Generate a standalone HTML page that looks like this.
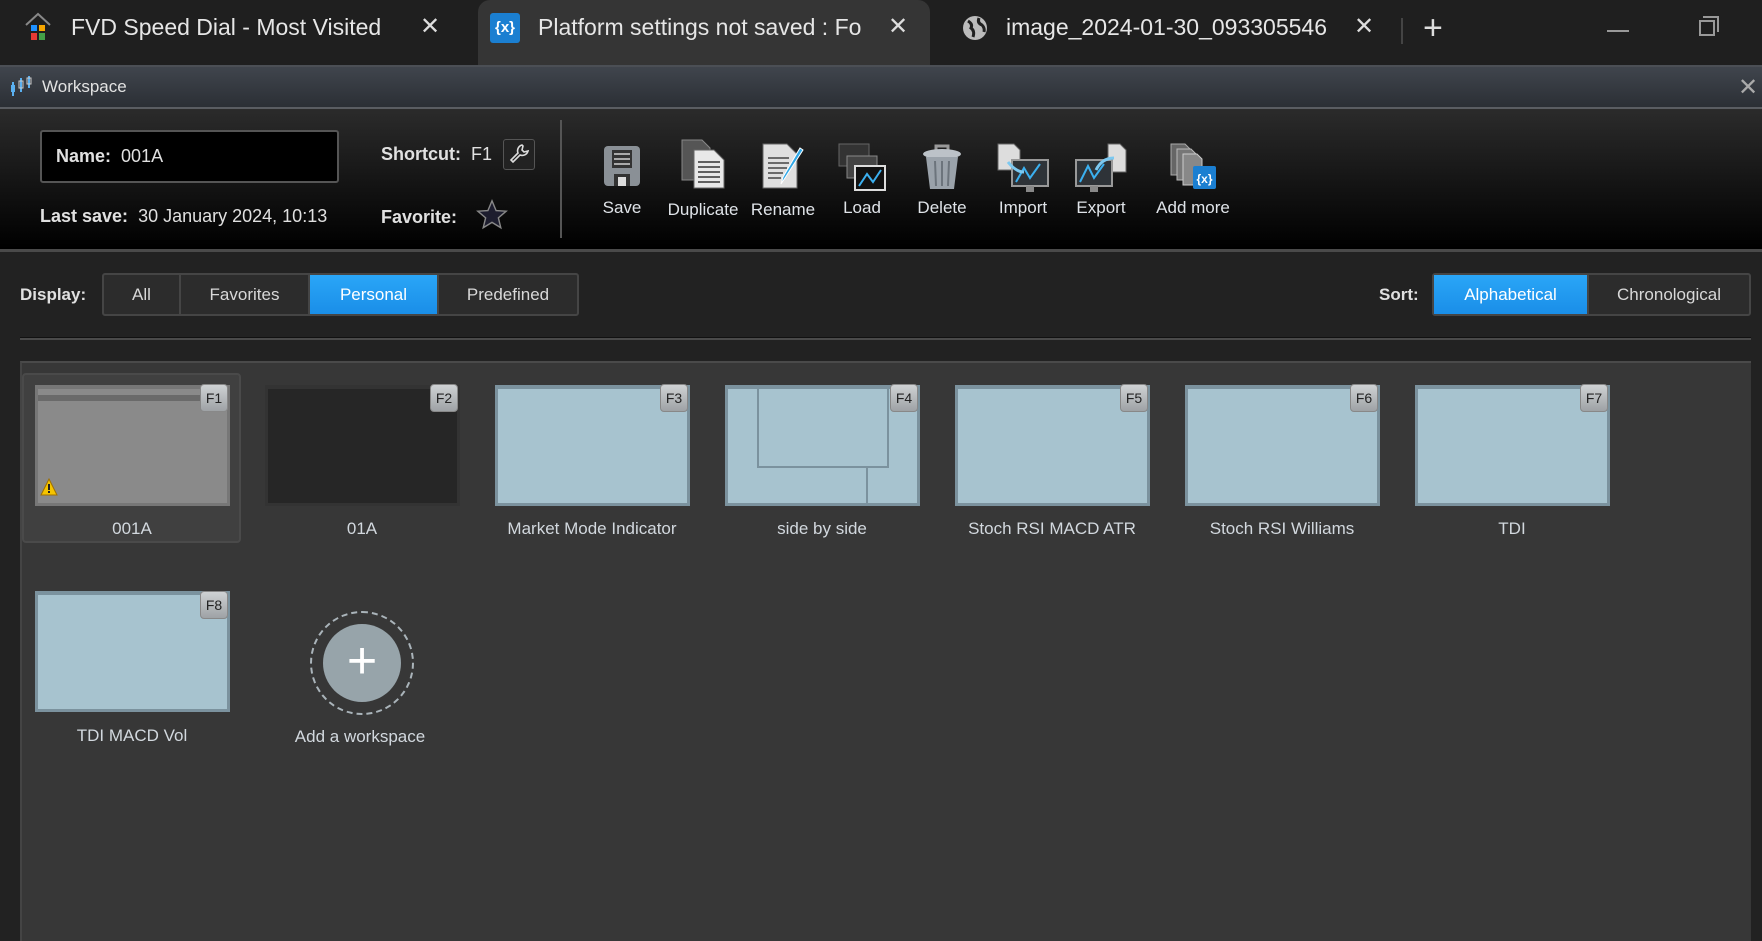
<!DOCTYPE html>
<html><head><meta charset="utf-8">
<style>
*{box-sizing:border-box;margin:0;padding:0}
body{width:1762px;height:932px;overflow:hidden;background:#222;font-family:"Liberation Sans",Arial,sans-serif;position:relative}
.a{position:absolute}
.tabbar{left:0;top:0;width:1762px;height:65px;background:#1f1f1f}
.tabtxt{font-size:23px;color:#e6e6e6;top:14px;white-space:nowrap}
.x{font-size:24px;color:#ddd;top:12px}
.title{left:0;top:65px;width:1762px;height:44px;background:linear-gradient(#40454d,#2b2f35);border-top:2px solid #4b4f55;border-bottom:2px solid #5a5d62}
.tool{left:0;top:109px;width:1762px;height:143px;background:linear-gradient(#2b2b2b,#000);border-bottom:3px solid #4a4a4a}
.lbl{color:#e0e0e0;font-size:17px;white-space:nowrap}
.hl{font-size:18px}
.b{font-weight:bold}
.tl{color:#dfe3e8;font-size:17px;top:198px;transform:translateX(-50%);white-space:nowrap}
.ico{top:142px;transform:translateX(-50%)}
.seg{top:273px;height:43px;border:2px solid #454545;border-radius:3px;display:flex;background:#2c2c2c}
.seg div{height:100%;display:flex;align-items:center;justify-content:center;color:#d8d8d8;font-size:17px;border-right:2px solid #454545}
.seg div:last-child{border-right:none}
.seg .on{background:linear-gradient(#2aa6f7,#1a8ee8);color:#fff}
.grid{left:20px;top:361px;width:1731px;height:580px;background:#373737;border-top:2px solid #4a4a4a;border-left:2px solid #444}
.th{width:195px;height:121px;background:#a7c3cf;border:3px solid #7b929e;border-top-width:4px}
.fk{width:28px;height:28px;border-radius:4px;background:linear-gradient(#cfd2d4,#9ea2a5);border:1px solid #888;font-size:14px;color:#222;display:flex;align-items:center;justify-content:center}
.nm{color:#d2d8de;font-size:17px;width:230px;text-align:center}
</style></head><body>
<div class="a tabbar"></div>
<div class="a" style="left:478px;top:0;width:452px;height:65px;background:#353535;border-radius:12px 12px 0 0"></div>
<svg class="a" style="left:24px;top:12px" width="28" height="32" viewBox="0 0 28 32"><path d="M2 13 L14 2 L26 13" fill="none" stroke="#888" stroke-width="2"/><rect x="7" y="13" width="6" height="6" fill="#1e90ff"/><rect x="15" y="13" width="6" height="6" fill="#f7a600"/><rect x="7" y="21" width="6" height="7" fill="#e53935"/><rect x="15" y="21" width="6" height="7" fill="#43a047"/></svg>
<div class="a tabtxt" style="left:71px">FVD Speed Dial - Most Visited</div>
<div class="a x" style="left:420px">✕</div>
<div class="a" style="left:490px;top:13px;width:30px;height:30px;background:#1b7fd1;border-radius:3px;color:#fff;font-size:15px;text-align:center;line-height:30px;font-weight:bold">{x}</div>
<div class="a tabtxt" style="left:538px;width:328px;overflow:hidden">Platform settings not saved : Fo</div>
<div class="a x" style="left:888px">✕</div>
<svg class="a" style="left:962px;top:15px" width="26" height="26" viewBox="0 0 26 26"><circle cx="13" cy="13" r="12" fill="#bbb"/><path d="M6 6 Q11 9 9 13 Q13 16 11 22 M17 3 Q15 8 20 10 Q23 13 22 17" fill="none" stroke="#1f1f1f" stroke-width="3"/></svg>
<div class="a tabtxt" style="left:1006px;width:325px;overflow:hidden">image_2024-01-30_093305546</div>
<div class="a x" style="left:1354px">✕</div>
<div class="a" style="left:1401px;top:18px;width:2px;height:26px;background:#444"></div>
<div class="a" style="left:1423px;top:9px;font-size:34px;color:#ddd">+</div>
<div class="a" style="left:1607px;top:30px;width:22px;height:2px;background:#999"></div>
<div class="a" style="left:1699px;top:20px;width:16px;height:16px;border:2px solid #999"></div>
<div class="a" style="left:1703px;top:16px;width:16px;height:16px;border-top:2px solid #999;border-right:2px solid #999"></div>

<div class="a title"></div>
<svg class="a" style="left:10px;top:74px" width="24" height="24" viewBox="0 0 24 24"><g stroke="#5ab0f0" stroke-width="2"><line x1="3" y1="8" x2="3" y2="22"/><line x1="11" y1="4" x2="11" y2="18"/><line x1="19" y1="2" x2="19" y2="14"/></g><rect x="1" y="11" width="4" height="7" fill="#5ab0f0"/><rect x="9" y="7" width="4" height="7" fill="none" stroke="#ccc"/><rect x="17" y="4" width="4" height="6" fill="none" stroke="#ccc"/></svg>
<div class="a" style="left:42px;top:77px;font-size:17px;color:#e2e2e2">Workspace</div>
<div class="a" style="left:1738px;top:73px;font-size:24px;color:#aaa">✕</div>

<div class="a tool"></div>
<div class="a" style="left:40px;top:130px;width:299px;height:53px;background:#000;border:2px solid #555;border-radius:3px"></div>
<div class="a lbl hl" style="left:56px;top:146px"><span class="b">Name:</span>&nbsp; 001A</div>
<div class="a lbl hl" style="left:40px;top:206px"><span class="b">Last save:</span>&nbsp; 30 January 2024, 10:13</div>
<div class="a lbl hl" style="left:381px;top:144px"><span class="b">Shortcut:</span>&nbsp; F1</div>
<div class="a" style="left:503px;top:139px;width:32px;height:31px;border:1px solid #555;border-radius:3px;background:#222"></div>
<svg class="a" style="left:508px;top:143px" width="22" height="22" viewBox="0 0 22 22"><path d="M14 2 a6 6 0 0 0 -4 8 L3 17 l2 2 7-7 a6 6 0 0 0 8-4 l-4 1 -2-2 1-4z" fill="none" stroke="#ddd" stroke-width="1.6"/></svg>
<div class="a lbl hl b" style="left:381px;top:207px">Favorite:</div>
<svg class="a" style="left:475px;top:198px" width="34" height="34" viewBox="0 0 24 24"><path d="M12 2 L14.9 8.9 22 9.3 16.5 14 18.2 21 12 17.2 5.8 21 7.5 14 2 9.3 9.1 8.9Z" fill="#1d1d2e" stroke="#888" stroke-width="1"/></svg>
<div class="a" style="left:560px;top:120px;width:2px;height:118px;background:#555"></div>

<svg class="a ico" style="left:622px" width="40" height="46" viewBox="0 0 40 46"><rect x="2" y="4" width="36" height="40" rx="4" fill="#8a9096"/><rect x="10" y="8" width="20" height="18" fill="#333"/><g stroke="#aaa" stroke-width="2"><line x1="12" y1="12" x2="28" y2="12"/><line x1="12" y1="17" x2="28" y2="17"/><line x1="12" y1="22" x2="28" y2="22"/></g><rect x="12" y="32" width="16" height="12" fill="#333"/><rect x="16" y="35" width="8" height="9" fill="#ddd"/></svg>
<svg class="a ico" style="left:703px;top:138px" width="50" height="52" viewBox="0 0 50 52"><path d="M4 2h20l8 8v32H4z" fill="#555" stroke="#888"/><path d="M16 12h20l10 10v28H16z" fill="#e8e8e8" stroke="#666"/><g stroke="#333" stroke-width="1.5"><line x1="20" y1="24" x2="42" y2="24"/><line x1="20" y1="29" x2="42" y2="29"/><line x1="20" y1="34" x2="42" y2="34"/><line x1="20" y1="39" x2="42" y2="39"/><line x1="20" y1="44" x2="42" y2="44"/></g></svg>
<svg class="a ico" style="left:783px" width="48" height="48" viewBox="0 0 48 48"><path d="M4 2h24l10 10v34H4z" fill="#e0e0e0" stroke="#666"/><g stroke="#444" stroke-width="1.5"><line x1="9" y1="16" x2="30" y2="16"/><line x1="9" y1="21" x2="30" y2="21"/><line x1="9" y1="26" x2="28" y2="26"/><line x1="9" y1="31" x2="24" y2="31"/><line x1="9" y1="36" x2="22" y2="36"/></g><path d="M44 8 L26 36 22 42 24 35 41 6z" fill="#2fa8e8" stroke="#fff" stroke-width="1"/></svg>
<svg class="a ico" style="left:862px" width="50" height="50" viewBox="0 0 50 50"><rect x="2" y="2" width="30" height="22" fill="#333" stroke="#666"/><rect x="10" y="14" width="30" height="22" fill="#444" stroke="#888"/><rect x="18" y="24" width="30" height="24" fill="#111" stroke="#ddd" stroke-width="2"/><path d="M22 44 L30 32 36 40 44 28" fill="none" stroke="#3bb0f0" stroke-width="2"/></svg>
<svg class="a ico" style="left:942px" width="42" height="50" viewBox="0 0 42 50"><path d="M15 8 v-4 h12 v4" fill="none" stroke="#999" stroke-width="3"/><ellipse cx="21" cy="12" rx="19" ry="5" fill="#bcc2c8"/><path d="M5 15 L9 47 h24 l4-32z" fill="#9aa2aa"/><g stroke="#6c747c" stroke-width="2"><line x1="14" y1="19" x2="15" y2="44"/><line x1="21" y1="19" x2="21" y2="44"/><line x1="28" y1="19" x2="27" y2="44"/></g></svg>
<svg class="a ico" style="left:1023px;top:142px" width="54" height="52" viewBox="0 0 54 52"><path d="M2 2h16l6 6v20H2z" fill="#ddd" stroke="#666"/><rect x="16" y="18" width="36" height="26" fill="#2e3338" stroke="#999" stroke-width="2"/><path d="M20 40 L28 26 34 36 44 22" fill="none" stroke="#3bb0f0" stroke-width="2"/><rect x="30" y="44" width="8" height="6" fill="#888"/><path d="M12 20 Q20 30 28 30" fill="none" stroke="#7cc8f0" stroke-width="3"/></svg>
<svg class="a ico" style="left:1101px;top:142px" width="54" height="52" viewBox="0 0 54 52"><path d="M34 2h12l6 6v22H34z" fill="#ddd" stroke="#666"/><rect x="2" y="18" width="36" height="26" fill="#2e3338" stroke="#999" stroke-width="2"/><path d="M6 40 L14 24 20 36 30 22" fill="none" stroke="#3bb0f0" stroke-width="2"/><rect x="16" y="44" width="8" height="6" fill="#888"/><path d="M22 28 Q28 16 40 16" fill="none" stroke="#7cc8f0" stroke-width="3"/></svg>
<svg class="a ico" style="left:1193px" width="48" height="48" viewBox="0 0 48 48"><path d="M2 2h14l5 5v26H2z" fill="#666" stroke="#aaa"/><path d="M8 7h14l5 5v26H8z" fill="#777" stroke="#bbb"/><path d="M14 12h14l5 5v26H14z" fill="#888" stroke="#ccc"/><rect x="24" y="24" width="23" height="23" rx="2" fill="#1b7fd1"/><text x="35.5" y="41" font-size="12" font-weight="bold" fill="#fff" text-anchor="middle" font-family="Liberation Sans">{x}</text></svg>
<div class="a tl" style="left:622px">Save</div>
<div class="a tl" style="left:703px;top:200px">Duplicate</div>
<div class="a tl" style="left:783px;top:200px">Rename</div>
<div class="a tl" style="left:862px">Load</div>
<div class="a tl" style="left:942px">Delete</div>
<div class="a tl" style="left:1023px">Import</div>
<div class="a tl" style="left:1101px">Export</div>
<div class="a tl" style="left:1193px">Add more</div>

<div class="a lbl b" style="left:20px;top:285px">Display:</div>
<div class="a seg" style="left:102px;width:477px">
<div style="width:77px">All</div><div style="width:129px">Favorites</div><div class="on" style="width:129px">Personal</div><div style="flex:1">Predefined</div></div>
<div class="a lbl b" style="left:1379px;top:285px">Sort:</div>
<div class="a seg" style="left:1432px;width:319px">
<div class="on" style="width:155px">Alphabetical</div><div style="flex:1">Chronological</div></div>
<div class="a" style="left:20px;top:337px;width:1731px;height:3px;background:#4a4a4a;border-top:1px solid #111"></div>

<div class="a grid"></div>
<div class="a" style="left:22px;top:373px;width:219px;height:170px;background:#404040;border:2px solid #4a4a4a;border-radius:4px"></div>
<div class="a th" style="left:35px;top:385px;background:#8a8a8a;border-color:#777"></div>
<div class="a" style="left:38px;top:395px;width:189px;height:6px;background:#6a6a6a"></div>
<svg class="a" style="left:40px;top:478px" width="18" height="18" viewBox="0 0 18 18"><path d="M9 1 L17 17 H1z" fill="#f5c400" stroke="#a07000"/><rect x="8" y="6" width="2" height="6" fill="#222"/><rect x="8" y="13" width="2" height="2" fill="#222"/></svg>
<div class="a th" style="left:265px;top:385px;background:#262626;border-color:#333"></div>
<div class="a th" style="left:495px;top:385px"></div>
<div class="a th" style="left:725px;top:385px"></div>
<div class="a" style="left:757px;top:388px;width:132px;height:80px;border:2px solid #7b929e;border-top:none"></div>
<div class="a" style="left:866px;top:468px;width:2px;height:35px;background:#7b929e"></div>
<div class="a th" style="left:955px;top:385px"></div>
<div class="a th" style="left:1185px;top:385px"></div>
<div class="a th" style="left:1415px;top:385px"></div>
<div class="a fk" style="left:200px;top:384px">F1</div>
<div class="a fk" style="left:430px;top:384px">F2</div>
<div class="a fk" style="left:660px;top:384px">F3</div>
<div class="a fk" style="left:890px;top:384px">F4</div>
<div class="a fk" style="left:1120px;top:384px">F5</div>
<div class="a fk" style="left:1350px;top:384px">F6</div>
<div class="a fk" style="left:1580px;top:384px">F7</div>
<div class="a nm" style="left:17px;top:519px">001A</div>
<div class="a nm" style="left:247px;top:519px">01A</div>
<div class="a nm" style="left:477px;top:519px">Market Mode Indicator</div>
<div class="a nm" style="left:707px;top:519px">side by side</div>
<div class="a nm" style="left:937px;top:519px">Stoch RSI MACD ATR</div>
<div class="a nm" style="left:1167px;top:519px">Stoch RSI Williams</div>
<div class="a nm" style="left:1397px;top:519px">TDI</div>
<div class="a th" style="left:35px;top:591px"></div>
<div class="a fk" style="left:200px;top:591px">F8</div>
<div class="a nm" style="left:17px;top:726px">TDI MACD Vol</div>
<div class="a" style="left:310px;top:611px;width:104px;height:104px;border:2px dashed #aab4ba;border-radius:50%"></div>
<div class="a" style="left:323px;top:624px;width:78px;height:78px;background:#97a4aa;border-radius:50%;color:#fff;font-size:52px;line-height:74px;text-align:center;font-weight:300">+</div>
<div class="a nm" style="left:245px;top:727px">Add a workspace</div>
</body></html>
